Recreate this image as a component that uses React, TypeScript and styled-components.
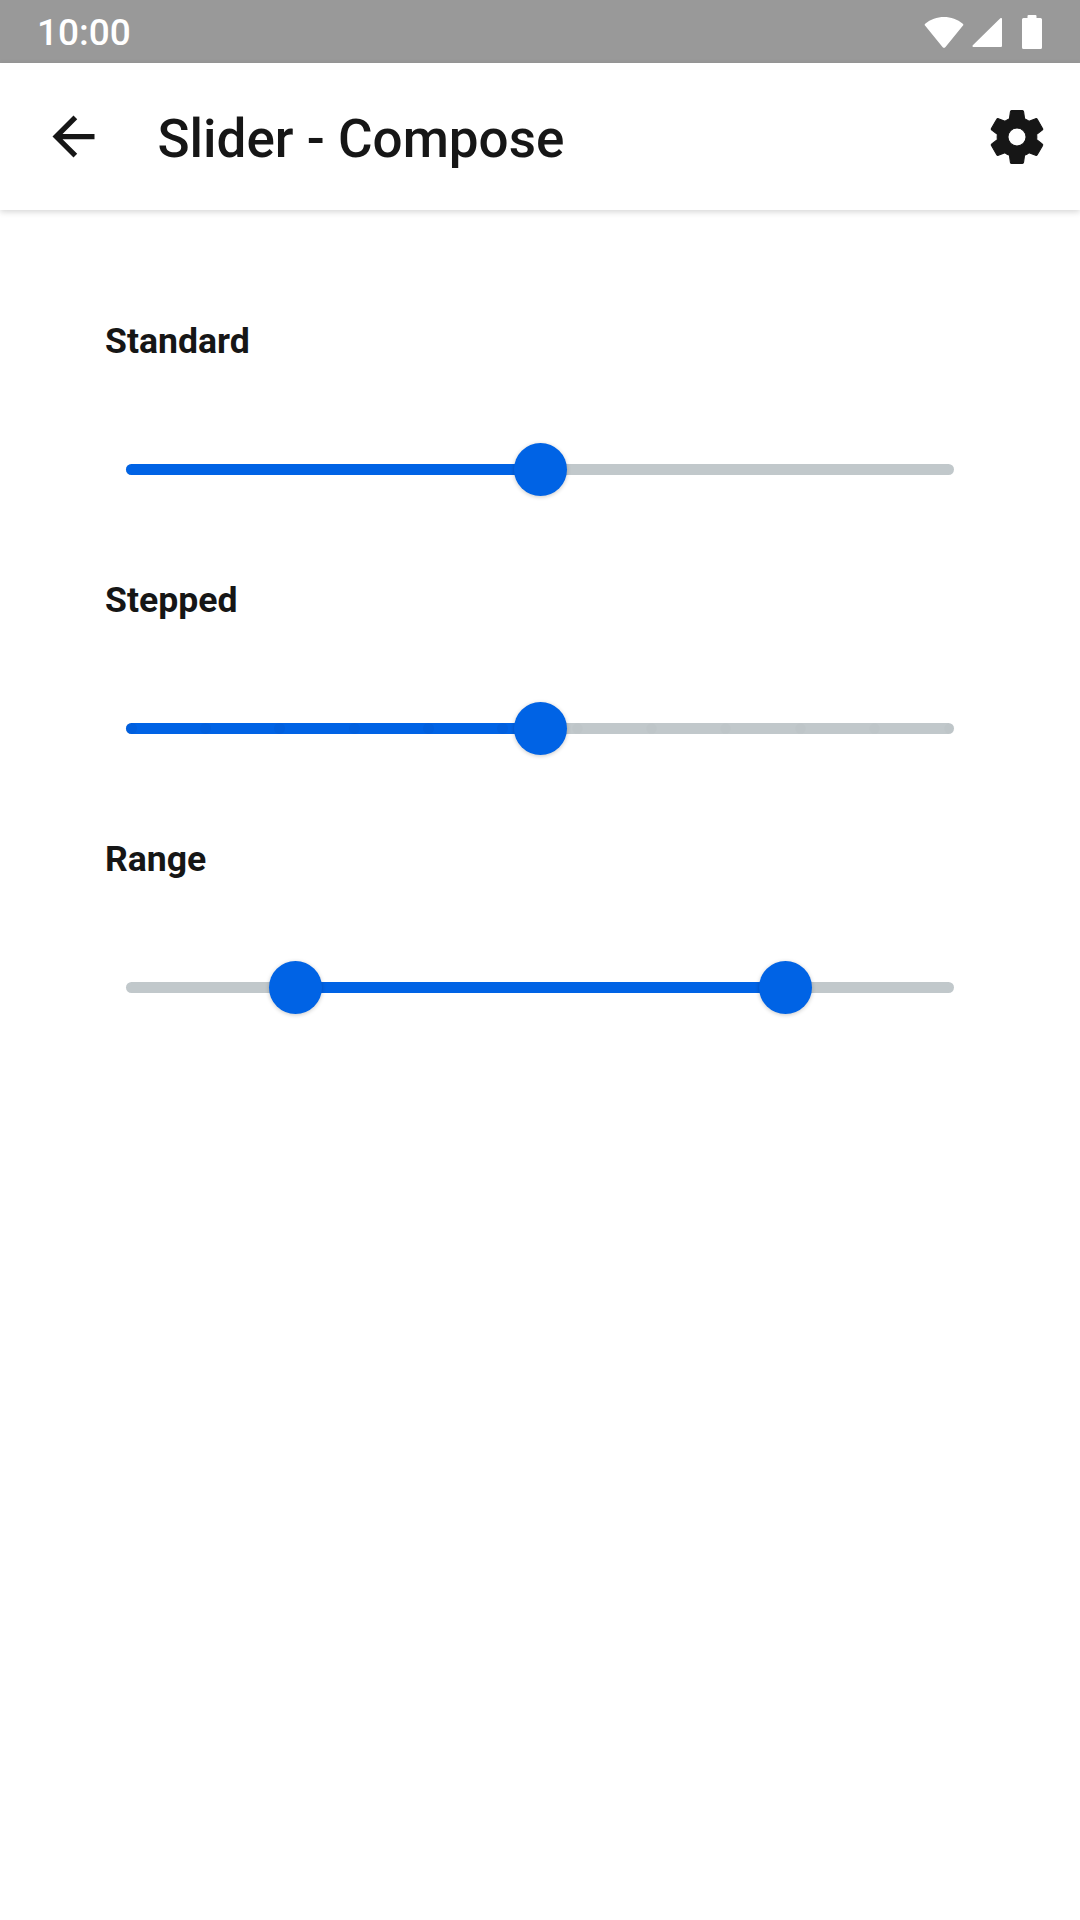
import React from 'react';
import styled, { createGlobalStyle } from 'styled-components';

const GlobalStyle = createGlobalStyle`
  html, body {
    margin: 0;
    padding: 0;
    background: #fff;
  }
`;

const Screen = styled.div`
  width: 1080px;
  height: 1920px;
  display: flex;
  flex-direction: column;
  font-family: Roboto, sans-serif;
  color: #161616;
  background: #fff;
  overflow: hidden;
`;

const StatusBar = styled.div`
  height: 63px;
  flex-shrink: 0;
  display: flex;
  align-items: center;
  justify-content: space-between;
  padding: 0 38px 0 37px;
  background: #999;
  color: #fff;
`;

const Clock = styled.span`
  font-size: 37px;
  font-weight: 500;
  padding-top: 2px;
`;

const StatusIcons = styled.div`
  display: flex;
  align-items: center;
  gap: 7px;

  svg:last-child {
    margin-left: 12px;
  }
`;

const AppBar = styled.header`
  height: 147px;
  flex-shrink: 0;
  display: flex;
  align-items: center;
  padding: 0 30px 0 42px;
  background: #fff;
  box-shadow: 0 2px 6px rgba(0, 0, 0, 0.16);
  position: relative;
`;

const Title = styled.h1`
  flex: 1;
  margin: 0 0 0 52.500px;
  padding-top: 4px;
  font-size: 53px;
  font-weight: 500;
`;

const Content = styled.main`
  padding: 105px 126px 0 105px;
  display: flex;
  flex-direction: column;
`;

const Row = styled.section`
  height: 259px;
`;

const Label = styled.h2`
  margin: 0;
  font-size: 35.600px;
  line-height: 52px;
  font-weight: 700;
`;

const SliderArea = styled.div`
  height: 53px;
  margin: 76px 0 0 21px;
  display: flex;
  align-items: center;
`;

const Track = styled.div`
  position: relative;
  width: 100%;
  height: 11px;
  border-radius: 6px;
  background: #c1c8cb;
`;

const Fill = styled.div`
  position: absolute;
  top: 0;
  bottom: 0;
  border-radius: 6px;
  background: #0063e5;
`;

const Tick = styled.span<{ $active: boolean }>`
  position: absolute;
  top: 0;
  width: 11px;
  height: 11px;
  margin-left: -5.5px;
  border-radius: 50%;
  background: ${p => (p.$active ? 'rgba(0, 40, 120, 0.06)' : 'rgba(0, 0, 0, 0.012)')};
`;

const Thumb = styled.span`
  position: absolute;
  top: 50%;
  width: 53px;
  height: 53px;
  margin: -26.5px 0 0 -26.5px;
  border-radius: 50%;
  background: #0063e5;
  box-shadow: 0 1px 4px rgba(0, 0, 0, 0.22);
`;

type SliderProps = {
  from?: number;
  to: number;
  thumbs: number[];
  steps?: number;
};

const Slider = ({ from = 0, to, thumbs, steps }: SliderProps) => (
  <SliderArea>
    <Track>
      <Fill style={{ left: `${from}%`, width: `${to - from}%` }} />
      {steps &&
        Array.from({ length: steps + 1 }, (_, i) => {
          const x = 5 + (818 * i) / steps;
          return <Tick key={i} $active={(x / 828) * 100 < to} style={{ left: x }} />;
        })}
      {thumbs.map(t => (
        <Thumb key={t} style={{ left: `${t}%` }} />
      ))}
    </Track>
  </SliderArea>
);

const App: React.FC = () => (
  <Screen>
    <GlobalStyle />
    <StatusBar>
      <Clock>10:00</Clock>
      <StatusIcons>
        <svg width="40" height="32" viewBox="0 0 40 32" fill="#fff">
          <path d="M1 9.500a1.200 1.200 0 0 1 .2-1.700C6.500 3.300 13 1 20 1s13.500 2.300 18.800 6.800a1.200 1.200 0 0 1 .2 1.700L21.500 31a2 2 0 0 1-3 0Z" />
        </svg>
        <svg width="32" height="32" viewBox="0 0 32 32" fill="#fff">
          <path d="M31 3v27a1 1 0 0 1-1 1H2.500a1 1 0 0 1-.7-1.700L29.300 2.300a1 1 0 0 1 1.700.7Z" />
        </svg>
        <svg width="20" height="34" viewBox="0 0 20 34" fill="#fff">
          <path d="M5.500 1a1 1 0 0 1 1-1h7a1 1 0 0 1 1 1v2h4A1.500 1.500 0 0 1 20 4.500V32.500a1.500 1.500 0 0 1-1.500 1.500H1.500A1.500 1.500 0 0 1 0 32.500V4.500A1.500 1.500 0 0 1 1.500 3h4Z" />
        </svg>
      </StatusIcons>
    </StatusBar>
    <AppBar>
      <svg width="63" height="63" viewBox="0 0 24 24" fill="#161616">
        <path d="M20 11H7.830l5.590-5.590L12 4l-8 8 8 8 1.410-1.410L7.830 13H20v-2z" />
      </svg>
      <Title>Slider - Compose</Title>
      <svg width="66" height="66" viewBox="0 0 24 24" fill="#161616" stroke="#161616" strokeWidth="0.4">
        <path d="M19.140 12.940c.04-.3.06-.61.06-.94 0-.32-.02-.64-.07-.94l2.030-1.580c.18-.14.23-.41.12-.61l-1.920-3.320c-.12-.22-.37-.29-.59-.22l-2.390.96c-.5-.38-1.030-.7-1.620-.94l-.36-2.540c-.04-.24-.24-.41-.48-.41h-3.840c-.24 0-.43.17-.47.41l-.36 2.540c-.59.24-1.130.57-1.620.94l-2.390-.96c-.22-.08-.47 0-.59.22L2.740 8.870c-.12.21-.08.47.12.61l2.030 1.580c-.05.3-.09.63-.09.94s.02.64.07.94l-2.030 1.580c-.18.14-.23.41-.12.61l1.920 3.320c.12.22.37.29.59.22l2.390-.96c.5.38 1.030.7 1.620.94l.36 2.540c.05.24.24.41.48.41h3.840c.24 0 .44-.17.47-.41l.36-2.540c.59-.24 1.130-.56 1.620-.94l2.390.96c.22.08.47 0 .59-.22l1.920-3.320c.12-.22.07-.47-.12-.61l-2.010-1.580zM12 15.300a3.300 3.300 0 1 1 0-6.600 3.300 3.300 0 0 1 0 6.600z" />
      </svg>
    </AppBar>
    <Content>
      <Row>
        <Label>Standard</Label>
        <Slider to={50} thumbs={[50]} />
      </Row>
      <Row>
        <Label>Stepped</Label>
        <Slider to={50} thumbs={[50]} steps={11} />
      </Row>
      <Row>
        <Label>Range</Label>
        <Slider from={20.47} to={79.65} thumbs={[20.47, 79.65]} />
      </Row>
    </Content>
  </Screen>
);

export default App;
